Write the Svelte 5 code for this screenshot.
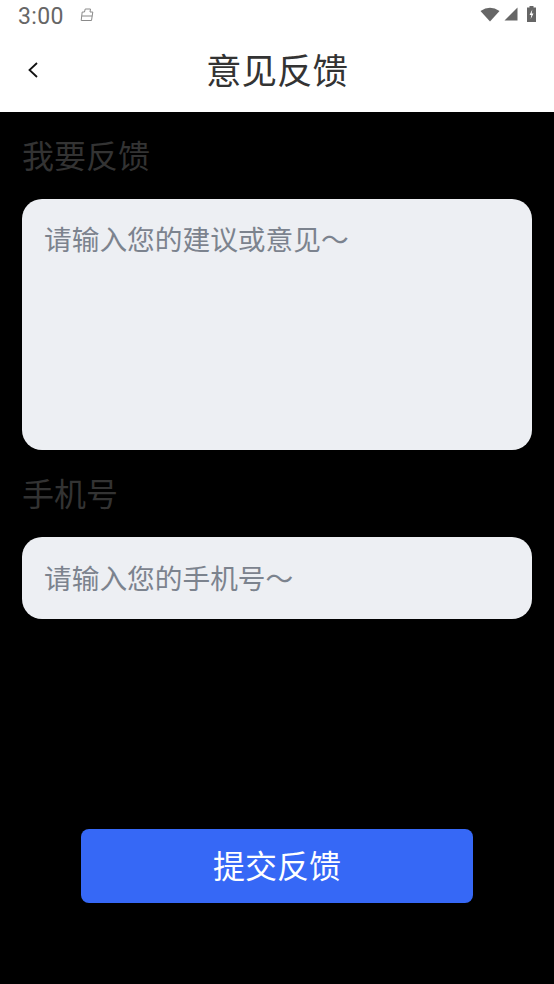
<script lang="ts">
  let feedback = '';
  let phone = '';
</script>

<div class="page">
  <div class="status-bar">
    <span class="time">3:00</span>
    <svg class="clip" width="14" height="14" viewBox="0 0 14 14" fill="none" stroke="#8a8a8a" stroke-width="1">
      <path d="M4.5 4 L5.2 1 H10.5 L10 4 H12.8 L11.5 12.5 H1.2 L2.2 4 Z M1.8 8 H12.2" />
    </svg>
    <div class="status-icons">
      <svg class="wifi" width="20" height="15" viewBox="0 0 20 15"><path d="M0.5 4 Q10 -2.5 19.5 4 L10 14.5 Z" fill="#666" /></svg>
      <svg width="14" height="14" viewBox="0 0 14 14"><path d="M13.5 0.5 V13.5 H0.5 Z" fill="#666" /></svg>
      <svg class="battery" width="9" height="16" viewBox="0 0 9 16">
        <path d="M2.5 0 H6.5 V1.5 H9 V16 H0 V1.5 H2.5 Z" fill="#666" />
        <path d="M5.3 3.5 L2.5 9 H4.3 L3.7 13 L6.5 7.5 H4.7 Z" fill="#fff" />
      </svg>
    </div>
  </div>

  <header class="nav">
    <button class="back" aria-label="返回">
      <svg width="12" height="16" viewBox="0 0 12 16" fill="none" stroke="#111" stroke-width="1.8">
        <path d="M10 1 L2.5 8 L10 15" />
      </svg>
    </button>
    <h1>意见反馈</h1>
  </header>

  <main class="content">
    <div class="label first">我要反馈</div>
    <textarea class="field area" placeholder="请输入您的建议或意见～" bind:value={feedback}></textarea>
    <div class="label second">手机号</div>
    <input class="field line" placeholder="请输入您的手机号～" bind:value={phone} />
    <button class="submit">提交反馈</button>
  </main>
</div>

<style>
  :global(body) {
    margin: 0;
    background: #000;
  }

  .page {
    width: 554px;
    height: 984px;
    display: flex;
    flex-direction: column;
    background: #000;
    font-family: "Noto Sans CJK SC", "Liberation Sans", sans-serif;
    overflow: hidden;
  }

  .status-bar {
    height: 32px;
    background: #fff;
    display: flex;
    align-items: center;
    padding: 0 18px;
    box-sizing: border-box;
  }

  .time {
    font-family: Roboto, sans-serif;
    font-size: 23px;
    color: #666;
    letter-spacing: 0.4px;
  }

  .clip {
    margin-left: 16px;
    margin-top: -3px;
  }

  .status-icons {
    margin-left: auto;
    display: flex;
    align-items: center;
    margin-top: -4px;
  }

  .wifi {
    margin-right: 4px;
  }

  .battery {
    margin-left: 9px;
  }

  .nav {
    height: 80px;
    background: #fff;
    display: flex;
    align-items: center;
    justify-content: center;
    position: relative;
  }

  .nav h1 {
    margin: 0;
    font-size: 35.5px;
    font-weight: 400;
    color: #333;
    margin-top: -7px;
  }

  .back {
    position: absolute;
    left: 27px;
    top: 30px;
    padding: 0;
    border: 0;
    background: none;
    line-height: 0;
  }

  .content {
    flex: 1;
    padding: 0 22px;
    display: flex;
    flex-direction: column;
  }

  .label {
    font-size: 32px;
    line-height: 44px;
    color: #333;
  }

  .first {
    margin-top: 20px;
    margin-bottom: 2px;
  }

  .second {
    margin-top: 20px;
    margin-bottom: 1px;
  }

  .field {
    display: block;
    width: 100%;
    box-sizing: border-box;
    border: 0;
    outline: 0;
    background: #edeff3;
    font-family: inherit;
    font-size: 27.7px;
    color: #333;
  }

  .field::placeholder {
    color: #7c838e;
    opacity: 1;
  }

  .area {
    margin-top: 21px;
    height: 251px;
    border-radius: 20px;
    padding: 19px 22px 0;
    line-height: 40px;
    resize: none;
  }

  .line {
    margin-top: 22px;
    height: 82px;
    border-radius: 20px;
    padding: 0 22px 3px;
  }

  .submit {
    align-self: center;
    margin-top: 210px;
    width: 392px;
    height: 74px;
    border: 0;
    border-radius: 8px;
    background: #3668f6;
    color: #fff;
    font-family: inherit;
    font-size: 32px;
    padding: 0 0 4px;
  }
</style>
